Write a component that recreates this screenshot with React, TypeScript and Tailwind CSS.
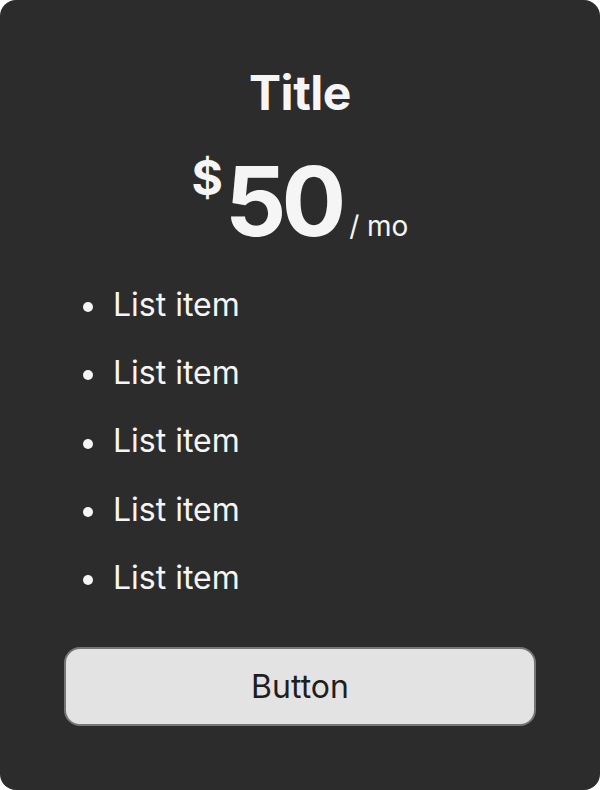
import React from "react";

export default function App() {
  const items = ["List item", "List item", "List item", "List item", "List item"];
  return (
    <div className="w-[600px] h-[790px] bg-white" style={{ fontFamily: "Inter, 'Noto Sans', sans-serif" }}>
      <div className="w-[600px] h-[790px] rounded-[16px] bg-[#2c2c2c] px-[64px] pt-[64px] pb-[64px] flex flex-col">
        <h1 className="text-center text-[48px] leading-[1.2] font-bold text-[#f5f5f5] tracking-[-0.5px]">Title</h1>
        <div className="flex justify-center items-start mt-[31px] h-[96px] text-[#f5f5f5]">
          <span className="text-[48px] font-bold leading-none mt-[1px] mr-[2px]">$</span>
          <span className="text-[96px] font-bold leading-none tracking-[-5px]">50</span>
          <span className="text-[28px] leading-none mt-[59px] ml-[8px] whitespace-nowrap">/ mo</span>
        </div>
        <ul className="pl-[19px] mt-[37px] flex flex-col gap-[30px] text-[#f5f5f5] text-[32px] leading-[1.2]">
          {items.map((t, i) => (
            <li key={i} className="flex items-center gap-[20px]">
              <span className="w-[10px] h-[10px] rounded-full bg-[#f5f5f5] mt-[4px] shrink-0" />
              <span>{t}</span>
            </li>
          ))}
        </ul>
        <button className="mt-auto h-[79px] w-full rounded-[16px] border-2 border-[#767676] bg-[#e3e3e3] text-[#1e1e1e] text-[32px] leading-none">
          Button
        </button>
      </div>
    </div>
  );
}
